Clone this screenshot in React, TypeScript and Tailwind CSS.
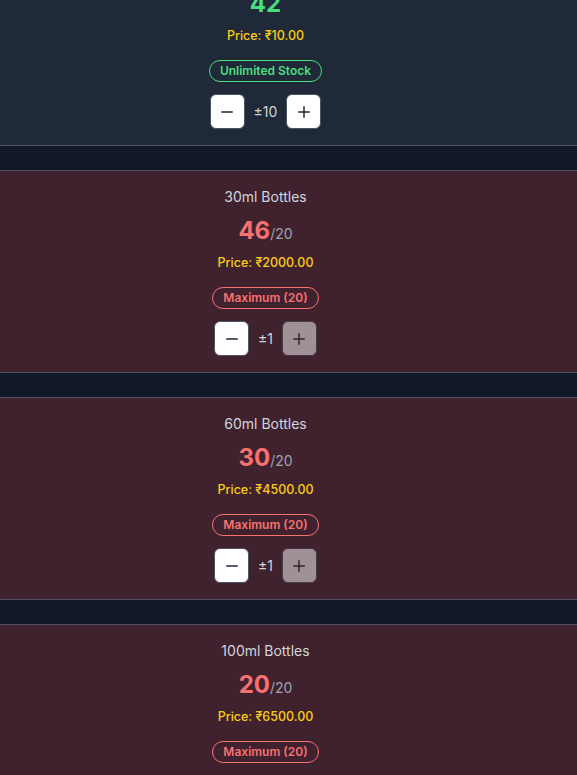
import React from "react";
import { Minus, Plus } from "lucide-react";

type Item = {
  name: string;
  count: number;
  max?: number;
  price: string;
  step: number;
};

const items: Item[] = [
  { name: "10ml Bottles", count: 42, price: "10.00", step: 10 },
  { name: "30ml Bottles", count: 46, max: 20, price: "2000.00", step: 1 },
  { name: "60ml Bottles", count: 30, max: 20, price: "4500.00", step: 1 },
  { name: "100ml Bottles", count: 20, max: 20, price: "6500.00", step: 1 },
];

function StockCard({ item }: { item: Item }) {
  const atMax = item.max !== undefined && item.count >= item.max;
  return (
    <div
      className={`border-y border-[#4b5563] py-4 pl-4 pr-[62px] flex flex-col items-center ${
        atMax ? "bg-[#40222e]" : "bg-[#1f2937]"
      }`}
    >
      <h3 className="text-sm leading-5 text-[#d1d5db]">{item.name}</h3>
      <div className="mt-2 h-8 flex items-baseline">
        <span className={`text-2xl leading-8 font-bold ${atMax ? "text-[#f87171]" : "text-[#4ade80]"}`}>
          {item.count}
        </span>
        {item.max !== undefined && (
          <span className="text-sm text-[#9ca3af]">/{item.max}</span>
        )}
      </div>
      <p className="mt-2 text-[12.5px] leading-4 font-medium text-[#facc15]">Price: ₹{item.price}</p>
      <span
        className={`mt-4 h-[22px] px-2.5 flex items-center rounded-full border text-xs font-semibold ${
          atMax ? "border-[#f87171] text-[#f87171]" : "border-[#4ade80] text-[#4ade80]"
        }`}
      >
        {atMax ? `Maximum (${item.max})` : "Unlimited Stock"}
      </span>
      <div className="mt-3 flex items-center gap-2">
        <button className="w-[35px] h-[35px] rounded-md bg-white border border-[#4b5563] flex items-center justify-center text-[#1f2937]">
          <Minus size={18} strokeWidth={2} />
        </button>
        <span className="text-sm text-[#d1d5db] px-[1px]">±{item.step}</span>
        <button
          className={`w-[35px] h-[35px] rounded-md bg-white border border-[#4b5563] flex items-center justify-center text-[#1f2937] ${
            atMax ? "opacity-50" : ""
          }`}
        >
          <Plus size={18} strokeWidth={2} />
        </button>
      </div>
    </div>
  );
}

export default function App() {
  return (
    <div className="min-h-screen bg-[#111827] overflow-hidden" style={{ fontFamily: "Inter, 'Noto Sans', sans-serif" }}>
      <div className="-mt-[57px] flex flex-col gap-6">
        {items.map((item) => (
          <StockCard key={item.name} item={item} />
        ))}
      </div>
    </div>
  );
}
